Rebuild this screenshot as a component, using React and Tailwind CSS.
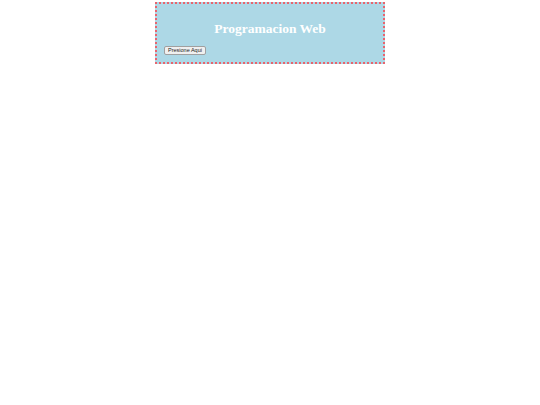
export default function App() {
  return (
    <div className="w-[540px] h-[405px] bg-white pt-[2px]">
      <div className="mx-auto box-border w-[230px] h-[62px] border-2 border-dotted border-[#e8646e] bg-[#add8e6] pt-[18px]">
        <h1 className="m-0 text-center text-white font-bold text-[13.5px] leading-[14px] font-['Liberation_Serif',serif]">
          Programacion Web
        </h1>
        <button className="block ml-[7px] mt-[10px] h-[9px] px-[3px] bg-[#f0f0f0] border border-solid border-[#a0a0a0] rounded-[2px] text-[5.5px] leading-[7px] text-[#222] font-['Liberation_Sans',sans-serif]">
          Presione Aqui
        </button>
      </div>
    </div>
  );
}
